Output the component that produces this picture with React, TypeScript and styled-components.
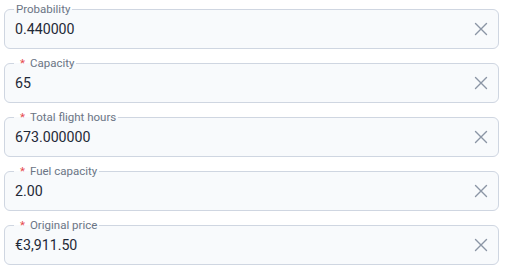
import React from 'react';
import styled, { createGlobalStyle } from 'styled-components';

const GlobalStyle = createGlobalStyle`
    html, body {
        margin: 0;
        padding: 0;
        background: #ffffff;
        font-family: Roboto, "Liberation Sans", Arial, sans-serif;
    }
`

type Field = {
    label: string;
    value: string;
    required?: boolean;
};

const fields: Field[] = [
    { label: 'Probability', value: '0.440000' },
    { label: 'Capacity', value: '65', required: true },
    { label: 'Total flight hours', value: '673.000000', required: true },
    { label: 'Fuel capacity', value: '2.00', required: true },
    { label: 'Original price', value: '€3,911.50', required: true },
];

const ClearIcon: React.FC = () => (
    <svg width="14" height="14" viewBox="0 0 14 14" fill="none">
        <path d="M1.5 1.5L12.5 12.5M12.5 1.5L1.5 12.5" stroke="#8b95a5" strokeWidth="1.4" strokeLinecap="round" />
    </svg>
);

const App: React.FC = () => {
    return (
        <>
            <GlobalStyle />
            <Form>
                {fields.map((f) => (
                    <Box key={f.label}>
                        <Legend>
                            {f.required && <Star>*</Star>}
                            {f.label}
                        </Legend>
                        <Row>
                            <Value>{f.value}</Value>
                            <ClearButton type="button" aria-label="Clear">
                                <ClearIcon />
                            </ClearButton>
                        </Row>
                    </Box>
                ))}
            </Form>
        </>
    );
}

const Form = styled.div`
    display: flex;
    flex-direction: column;
    gap: 7px;
    padding: 2px 6px 0 4px;
    width: 495px;
`

const Box = styled.fieldset`
    margin: 0;
    padding: 0 10px 0 10px;
    border: 1px solid #cfd6e1;
    border-radius: 6px;
    background: #f8fafc;
    height: 47px;
    box-sizing: border-box;
    min-width: 0;
`

const Legend = styled.legend`
    padding: 0 2px;
    margin-left: -1px;
    font-size: 11.5px;
    line-height: 14px;
    color: #6b7585;
`

const Star = styled.span`
    color: #e5484d;
    margin-right: 5px;
    margin-left: 4px;
`

const Row = styled.div`
    display: flex;
    align-items: center;
    justify-content: space-between;
    height: 28px;
    margin-top: -1px;
`

const Value = styled.span`
    font-size: 14.2px;
    color: #1f2937;
    padding-left: 0;
`

const ClearButton = styled.button`
    display: flex;
    align-items: center;
    justify-content: center;
    border: none;
    background: none;
    padding: 0;
    cursor: pointer;
`

export default App;
